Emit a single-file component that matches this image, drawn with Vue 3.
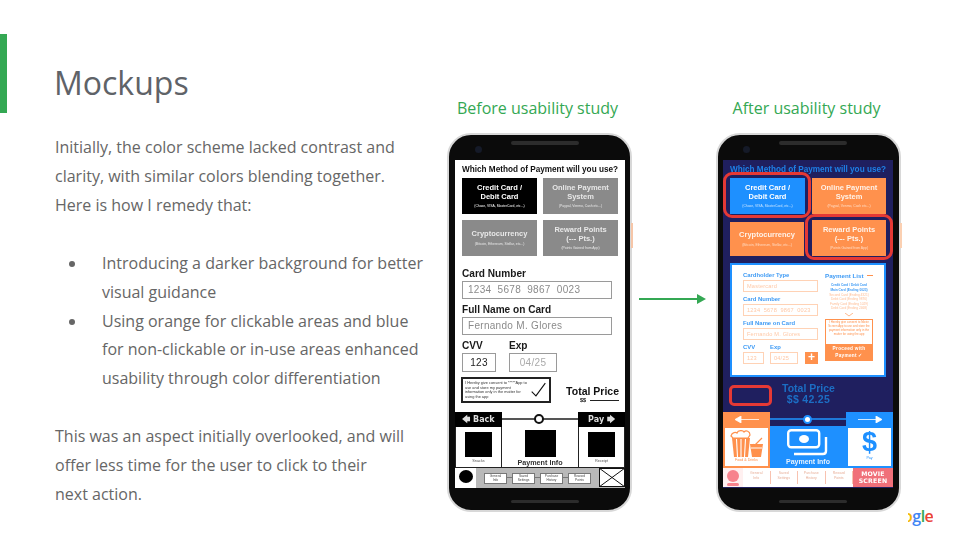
<template>
  <div class="slide">
    <div class="accent" />

    <section class="copy">
      <h1 class="copy__title">Mockups</h1>
      <p>Initially, the color scheme lacked contrast and<br>clarity, with similar colors blending together.<br>Here is how I remedy that:</p>
      <ul>
        <li>Introducing a darker background for better<br>visual guidance</li>
        <li>Using orange for clickable areas and blue<br>for non-clickable or in-use areas enhanced<br>usability through color differentiation</li>
      </ul>
      <p>This was an aspect initially overlooked, and will<br>offer less time for the user to click to their<br>next action.</p>
    </section>

    <!-- Before -->
    <section class="study">
      <h2 class="study__label">Before usability study</h2>
      <div class="phone phone--before">
        <div class="phone__top"><i class="cam" /><i class="speaker" /></div>
        <div class="screen old">
          <div class="s-title">Which Method of Payment will you use?</div>
          <div class="methods">
            <div v-for="(m, i) in methods" :key="m.name" class="method" :class="{ 'method--on': i === 0 }">
              <b>{{ m.name }}<br v-if="m.name2">{{ m.name2 }}</b>
              <small>{{ m.sub }}</small>
            </div>
          </div>

          <div class="form">
            <label>Card Number</label>
            <div class="inp">{{ cardNumber }}</div>
            <label>Full Name on Card</label>
            <div class="inp">Fernando M. Glores</div>
            <div class="row-cvv">
              <div>
                <label>CVV</label>
                <div class="inp inp--cvv">123</div>
              </div>
              <div>
                <label>Exp</label>
                <div class="inp inp--exp">04/25</div>
              </div>
            </div>
            <div class="row-consent">
              <div class="consent">
                <span>I Hereby give consent to *****App to use and store my payment information only in the matter for using the app</span>
                <svg width="20" height="18" viewBox="0 0 20 18"><path d="M2 11l5 5L18 1" fill="none" stroke="#111" stroke-width="1.3" /></svg>
              </div>
              <div class="total">
                <b>Total Price</b>
                <div class="total__line"><b>$$</b><i /></div>
              </div>
            </div>
          </div>

          <div class="nav">
            <div class="nav__btn">🡄 Back</div>
            <div class="nav__track"><i /></div>
            <div class="nav__btn">Pay 🡆</div>
          </div>
          <div class="panels">
            <div class="panel"><i class="sq" /><small>Snacks</small></div>
            <div class="panel panel--mid"><i class="sq sq--big" /><b>Payment Info</b></div>
            <div class="panel"><i class="sq" /><small>Receipt</small></div>
          </div>
          <div class="foot">
            <div class="foot__me"><i /></div>
            <div class="foot__tabs">
              <span v-for="t in tabs" :key="t[0]">{{ t[0] }}<br>{{ t[1] }}</span>
            </div>
            <svg class="foot__x" width="26" height="19" viewBox="0 0 26 19">
              <rect x="0.5" y="0.5" width="25" height="18" fill="#fff" stroke="#111" />
              <path d="M0 0l26 19M26 0L0 19" stroke="#111" stroke-width="1" />
            </svg>
          </div>
        </div>
        <div class="phone__bottom"><i class="speaker" /></div>
        <i class="side-key" />
      </div>
    </section>

    <div class="arrow">
      <svg width="68" height="12" viewBox="0 0 68 12"><path d="M0 6h60" stroke="#34a853" stroke-width="2" /><path d="M58 1l9 5-9 5z" fill="#34a853" /></svg>
    </div>

    <!-- After -->
    <section class="study">
      <h2 class="study__label">After usability study</h2>
      <div class="phone phone--after">
        <div class="phone__top"><i class="cam" /><i class="speaker" /></div>
        <div class="screen new">
          <div class="s-title">Which Method of Payment will you use?</div>
          <div class="methods methods--new">
            <div v-for="(m, i) in methods" :key="m.name" class="method" :class="{ 'method--on': i === 0 }">
              <b>{{ m.name }}<br v-if="m.name2">{{ m.name2 }}</b>
              <small>{{ m.sub }}</small>
            </div>
          </div>

          <div class="card">
            <div class="card__left">
              <label>Cardholder Type</label>
              <div class="pin">Mastercard</div>
              <label>Card Number</label>
              <div class="pin">{{ cardNumber }}</div>
              <label>Full Name on Card</label>
              <div class="pin">Fernando M. Glores</div>
              <div class="pin-row">
                <div><label>CVV</label><div class="pin pin--cvv">123</div></div>
                <div><label>Exp</label><div class="pin pin--exp">04/25</div></div>
                <div class="plus">+</div>
              </div>
            </div>
            <div class="card__right">
              <div class="plist-h"><b>Payment List</b><i /></div>
              <div class="plist">
                <b>Credit Card / Debit Card</b>
                <b>Main Card (Ending 0023)</b>
                <span v-for="c in savedCards" :key="c">{{ c }}</span>
              </div>
              <svg class="chev" width="8" height="4" viewBox="0 0 8 4"><path d="M0 0l4 3 4-3" fill="none" stroke="#ffb98c" /></svg>
              <div class="proceed">
                <span>I Hereby give consent to Movie Screen App to use and store the payment information only in the matter for using the app</span>
                <b>Proceed with<br>Payment ✓</b>
              </div>
            </div>
          </div>

          <div class="tot2">
            <i class="tot2__empty" />
            <div class="tot2__txt"><b>Total Price</b><b class="tot2__amt">$$ 42.25</b></div>
          </div>

          <div class="nav nav--new">
            <div class="nav__btn nav__btn--or"><svg width="24" height="7" viewBox="0 0 24 7"><path d="M6 0L0 3.5 6 7zM5 3.5h19" fill="#fff" stroke="#fff" stroke-width=".8" /></svg></div>
            <div class="nav__track"><i /></div>
            <div class="nav__btn nav__btn--bl"><svg width="24" height="7" viewBox="0 0 24 7"><path d="M18 0l6 3.5L18 7zM0 3.5h19" fill="#fff" stroke="#fff" stroke-width=".8" /></svg></div>
          </div>
          <div class="panels panels--new">
            <div class="panel panel--food">
              <svg width="34" height="28" viewBox="0 0 34 28">
                <path d="M1 6c1-4 5-4 6-3 1-3 6-3 7-1 2-2 6-1 6 3l-2 3H3z" fill="#fff" stroke="#ff914d" stroke-width="1.2" />
                <path d="M2 8h18l-2 19H4z" fill="#ff914d" />
                <path d="M6.500 9l1 18M11 9v18M15.500 9l-1 18" stroke="#fff" stroke-width="1.1" />
                <path d="M20 14h13l-2 13H22z" fill="#ff914d" />
                <path d="M23 14l1 2 8-8" fill="none" stroke="#ff914d" stroke-width="1.2" />
                <path d="M21 18h11" stroke="#fff" stroke-width="1" />
              </svg>
              <small>Food &amp; Drinks</small>
            </div>
            <div class="panel panel--pay">
              <svg width="42" height="27" viewBox="0 0 42 27">
                <rect x="1.200" y="1.200" width="31" height="17" rx="3" fill="none" stroke="#fff" stroke-width="2.400" />
                <ellipse cx="17" cy="10" rx="5" ry="4" fill="#fff" />
                <path d="M39 8v14q0 3-3 3H7" fill="none" stroke="#fff" stroke-width="2.400" />
              </svg>
              <b>Payment Info</b>
            </div>
            <div class="panel panel--dollar">
              <span class="dollar">$</span>
              <small>Pay</small>
            </div>
          </div>
          <div class="foot2">
            <div class="foot2__me"><i /><u /></div>
            <span v-for="t in tabs" :key="t[0]" class="foot2__tab">{{ t[0] }}<br>{{ t[1] }}</span>
            <div class="foot2__logo">MOVIE<br>SCREEN</div>
          </div>

          <i class="ring ring--credit" />
          <i class="ring ring--reward" />
        </div>
        <div class="phone__bottom"><i class="speaker" /></div>
        <i class="side-key side-key--after" />
      </div>
    </section>

    <div class="logo"><span class="y">o</span><span class="b">g</span><span class="g">l</span><span class="r">e</span></div>
  </div>
</template>

<script setup>
const cardNumber = '1234  5678  9867  0023'

const methods = [
  { name: 'Credit Card /', name2: 'Debit Card', sub: '(Chase, VISA, MasterCard, etc...)' },
  { name: 'Online Payment', name2: 'System', sub: '(Paypal, Venmo, Cash etc...)' },
  { name: 'Cryptocurrency', name2: '', sub: '(Bitcoin, Ethereum, Stellar, etc...)' },
  { name: 'Reward Points', name2: '(--- Pts.)', sub: '(Points Gained from App)' },
]

const tabs = [
  ['General', 'Info'],
  ['Saved', 'Settings'],
  ['Purchase', 'History'],
  ['Reward', 'Points'],
]

const savedCards = [
  'Second Card (Ending 4321)',
  'Debit Card (Ending 9876)',
  'Family Card (Ending 1029)',
  'Debit Card (Ending 2468)',
]
</script>

<style>
html, body { margin: 0; background: #fff; }
</style>

<style scoped>
.slide {
  position: relative;
  width: 960px;
  height: 540px;
  overflow: hidden;
  display: flex;
  background: #fff;
  font-family: "Open Sans", sans-serif;
  color: #666;
}
.accent { width: 7px; height: 79px; margin-top: 34px; background: #34a853; flex: none; }

.copy { width: 385px; margin-left: 48px; flex: none; font-size: 16px; line-height: 28.9px; }
.copy__title { margin: 60px 0 0 -1px; height: 50px; font-size: 32px; line-height: 46px; font-weight: 400; color: #5f6368; }
.copy p { margin: 0; }
.copy p:first-of-type { margin-top: 23px; }
.copy ul { list-style: none; margin: 29px 0; padding: 0 0 0 47px; }
.copy li { position: relative; }
.copy li::before {
  content: '';
  position: absolute;
  left: -33px;
  top: 12px;
  width: 6px;
  height: 6px;
  border-radius: 50%;
  background: #666;
}

.study { width: 185px; flex: none; }
.copy + .study { margin-left: 7px; }
.study__label { margin: 96px 4px 12px 0; height: 25px; font-size: 16px; line-height: 25px; font-weight: 400; color: #34a853; text-align: center; white-space: nowrap; }

.phone {
  position: relative;
  box-sizing: border-box;
  width: 185px;
  height: 379px;
  border: 2px solid #d8d8d8;
  border-radius: 24px;
  background: #0b0b0b;
  padding-left: 6px;
}
.phone--after { padding-left: 5px; }
.phone__top { position: relative; height: 25px; }
.phone__bottom { position: relative; height: 22px; }
.speaker { position: absolute; left: 56px; top: 6px; width: 68px; height: 4px; border-radius: 2px; background: #2c2c2c; }
.phone__bottom .speaker { top: 12px; height: 3px; }
.cam { position: absolute; left: 20px; top: 11px; width: 7px; height: 7px; border-radius: 50%; background: #151a28; }
.side-key { position: absolute; right: -3px; top: 88px; width: 2px; height: 25px; background: #f6c6a8; }
.side-key--after { background: #fbd0b2; }

.screen {
  position: relative;
  width: 170px;
  height: 328px;
  overflow: hidden;
  font-family: "Liberation Sans", sans-serif;
  filter: blur(0.5px);
}
.s-title { height: 17px; padding-top: 1px; line-height: 17px; font-size: 8.200px; font-weight: 700; text-align: center; white-space: nowrap; }

.methods { display: grid; grid-template-columns: 75px 75px; grid-auto-rows: 36px; gap: 6px; padding-left: 7px; }
.method {
  display: flex;
  flex-direction: column;
  align-items: center;
  justify-content: center;
  gap: 3px;
  color: #fff;
  text-align: center;
}
.method b { font-size: 7.500px; line-height: 8.200px; }
.method small { font-size: 3.400px; line-height: 4px; white-space: nowrap; }

.old { background: #fff; color: #111; }
.old .method { background: #8a8a8a; color: #e8e8e8; }
.old .method--on { background: #000; color: #fff; }

.form { padding: 11px 7px 0; }
.form label { display: block; height: 14px; font-size: 10.100px; line-height: 14px; font-weight: 700; color: #1a1a1a; }
.inp {
  box-sizing: border-box;
  width: 150px;
  height: 18px;
  margin-bottom: 4px;
  padding-left: 5px;
  border: 1px solid #9a9a9a;
  font-size: 10px;
  line-height: 16px;
  letter-spacing: 0.3px;
  color: #8b8b8b;
  white-space: pre;
}
.row-cvv { display: flex; gap: 13px; }
.inp--cvv { width: 34px; height: 19px; margin: 0; padding: 0; text-align: center; color: #222; line-height: 17px; }
.inp--exp { width: 48px; height: 19px; margin: 0; padding: 0; text-align: center; line-height: 17px; color: #aaa; }
.row-consent { display: flex; margin-top: 5px; height: 26px; }
.consent {
  box-sizing: border-box;
  display: flex;
  align-items: center;
  width: 90px;
  margin-left: -1px;
  padding: 0 2px;
  border: 2px solid #222;
  font-size: 3.900px;
  line-height: 4.500px;
  color: #333;
}
.consent span { width: 65px; flex: none; }
.total { margin-left: 14px; padding-top: 9px; text-align: right; width: 54px; flex: none; }
.total > b { display: block; font-size: 10.500px; line-height: 11px; white-space: nowrap; }
.total__line { display: flex; align-items: center; justify-content: flex-end; gap: 4px; font-size: 5.500px; line-height: 7px; }
.total__line i { width: 29px; height: 1.500px; background: #222; }

.nav { display: flex; height: 15px; margin-top: 9px; }
.nav__btn { width: 47px; flex: none; display: flex; align-items: center; justify-content: center; background: #000; color: #ddd; font-size: 8px; font-weight: 700; white-space: nowrap; font-family: "DejaVu Sans", sans-serif; }
.nav__track { position: relative; flex: 1; }
.nav__track::before { content: ''; position: absolute; left: 0; right: 0; top: 6px; height: 1.500px; background: #555; }
.nav__track i { position: absolute; left: 32px; top: 2px; width: 6px; height: 6px; border: 2px solid #111; border-radius: 50%; background: #fff; }

.panels { display: flex; height: 41px; }
.panel { width: 47px; flex: none; box-sizing: border-box; display: flex; flex-direction: column; align-items: center; border: 1px solid #222; border-top: 0; padding-top: 5px; }
.panel small { margin-top: 2px; font-size: 3.800px; line-height: 5px; color: #555; }
.panel--mid { flex: 1; width: auto; border-left: 0; border-right: 0; padding-top: 3px; }
.panel--mid b { font-size: 7.200px; line-height: 9px; margin-top: 1px; color: #333; white-space: nowrap; }
.sq { width: 27px; height: 25px; background: #000; }
.sq--big { width: 31px; height: 27px; }

.foot { display: flex; height: 20px; background: #b9b9b9; }
.foot__me { width: 21px; flex: none; background: #fff; display: flex; justify-content: center; padding-top: 2px; box-sizing: border-box; }
.foot__me i { width: 14px; height: 13px; border-radius: 50%; background: #000; }
.foot__tabs { position: relative; flex: 1; display: flex; justify-content: center; align-items: center; gap: 5px; padding: 0 3px; }
.foot__tabs::before { content: ''; position: absolute; left: 8px; right: 8px; top: 9px; height: 1px; background: #777; }
.foot__tabs span { position: relative; width: 23px; box-sizing: border-box; height: 11px; border: 0.500px solid #777; background: #fff; font-size: 3.200px; line-height: 4.500px; text-align: center; color: #444; white-space: nowrap; }
.foot__x { flex: none; }

/* pantalla final */
.new { background: #1f1f5f; color: #1e88e5; }
.new .s-title { color: #1e80e6; }
.new .method { background: #ff914d; color: #fff2e8; }
.new .method--on { background: #1e90ff; color: #fff; }
.methods--new { grid-template-columns: 75px 74px; gap: 6px 7px; }
.methods--new .method:nth-child(3) { margin-top: 2px; width: 74px; }
.methods--new .method small { opacity: .75; }

.ring { position: absolute; box-sizing: border-box; width: 88px; height: 46px; border: 3px solid #e53935; border-radius: 9px; }
.ring--credit { left: 0; top: 12px; }
.ring--reward { left: 82px; top: 54px; }

.card {
  box-sizing: border-box;
  display: flex;
  width: 156px;
  height: 114px;
  margin: 7px 0 0 7px;
  padding: 6px 0 0 11px;
  border: 2px solid #1e90ff;
  background: #fff;
}
.card label { display: block; height: 9px; font-size: 5.900px; line-height: 9px; font-weight: 700; color: #3f9bf5; white-space: nowrap; }
.card__left { width: 75px; flex: none; }
.pin {
  box-sizing: border-box;
  height: 12px;
  margin-bottom: 3px;
  padding-left: 3px;
  border: 1px solid #ffd2b5;
  font-size: 5.600px;
  line-height: 10px;
  letter-spacing: 0.2px;
  color: #ffc8a6;
  white-space: pre;
}
.pin-row { display: flex; gap: 6px; align-items: flex-end; }
.pin--cvv { width: 21px; margin: 0; }
.pin--exp { width: 28px; margin: 0; }
.plus { width: 14px; height: 12px; margin-left: 1px; background: #ff914d; color: #fff; font-size: 12px; line-height: 11px; font-weight: 700; text-align: center; }

.card__right { width: 48px; margin-left: 7px; flex: none; text-align: center; }
.plist-h { display: flex; align-items: center; gap: 3px; height: 9px; font-size: 6.200px; color: #3f9bf5; white-space: nowrap; }
.plist-h i { width: 7px; height: 1px; background: #ff914d; }
.plist { margin-top: 3px; display: flex; flex-direction: column; font-size: 3.200px; line-height: 4.300px; white-space: nowrap; align-items: center; color: #ffbd95; }
.plist b { color: #3f9bf5; line-height: 5px; }
.chev { display: block; margin: 3px auto 2px; }
.proceed { box-sizing: border-box; height: 42px; border: 1px solid #ff914d; background: #ff914d; display: flex; flex-direction: column; }
.proceed span { height: 23px; background: #fff; font-size: 2.900px; line-height: 3.900px; color: #ff914d; padding: 1px 1px 0; overflow: hidden; }
.proceed b { font-size: 4.700px; line-height: 7px; color: #fff; letter-spacing: 0.3px; padding-top: 1px; }

.tot2 { display: flex; height: 35px; padding-left: 6px; }
.tot2__empty { box-sizing: border-box; width: 43px; height: 21px; margin-top: 8px; border: 3px solid #e53935; border-radius: 5px; }
.tot2__txt { display: flex; flex-direction: column; align-items: center; margin-left: 10px; padding-top: 6px; font-size: 10.500px; line-height: 11px; color: #1c6ec4; }
.tot2__amt { letter-spacing: 0.3px; }

.nav--new { margin-top: 0; height: 14px; }
.nav__btn--or { background: #ff914d; }
.nav__btn--bl { background: #1e90ff; }
.nav--new .nav__track::before { background: #1e78d8; top: 6px; }
.nav--new .nav__track i { left: 33px; top: 3px; width: 5px; height: 5px; border: 2px solid #1e90ff; }

.panels--new { height: 42px; }
.panels--new .panel { border: 0; }
.panel--food { background: #fff; border: 2px solid #ff914d !important; padding-top: 2px; }
.panel--food small { margin-top: 0; color: #ff914d; font-size: 3.600px; }
.panel--pay { flex: 1; width: auto; background: #1e90ff; padding-top: 3px; }
.panel--pay b { margin-top: 1px; font-size: 7px; line-height: 9px; color: #e6f2ff; white-space: nowrap; }
.panel--dollar { background: #fff; border: 2px solid #1e90ff !important; padding-top: 0; }
.dollar { font-size: 27px; line-height: 28px; color: #1e90ff; font-weight: 700; }
.panel--dollar small { margin-top: 0; font-size: 3.600px; color: #1e90ff; }

.foot2 { display: flex; height: 19px; background: #fff; }
.foot2__me { position: relative; width: 20px; flex: none; background: #fff0f0; }
.foot2__me i { position: absolute; left: 4px; top: 2px; width: 12px; height: 12px; border-radius: 50%; background: #f7838d; }
.foot2__me u { position: absolute; left: 4px; top: 15px; width: 12px; height: 3px; border-radius: 2px; background: #f7838d; }
.foot2__tab { width: 27.500px; flex: none; box-sizing: border-box; margin: 3px 0; border-right: 0.500px solid #f8c2b0; font-size: 3.500px; line-height: 5px; text-align: center; color: #e8b09a; white-space: nowrap; }
.foot2__logo { flex: 1; background: #f0707a; color: #fff; font-size: 6.200px; line-height: 7px; font-weight: 700; text-align: center; padding-top: 2px; letter-spacing: 0.2px; font-family: "DejaVu Sans", sans-serif; }

.arrow { width: 84px; flex: none; box-sizing: border-box; padding: 293px 0 0 7px; }
.arrow svg { display: block; }

.logo { position: absolute; left: 908px; top: 505px; width: 25px; height: 22px; overflow: hidden; font-family: "Open Sans", sans-serif; font-size: 16px; font-weight: 600; line-height: 22px; letter-spacing: -0.5px; white-space: nowrap; }
.logo .y { margin-left: -5px; color: #f5b800; }
.logo .b { color: #4285f4; }
.logo .g { color: #34a853; }
.logo .r { color: #ea4335; }
</style>
